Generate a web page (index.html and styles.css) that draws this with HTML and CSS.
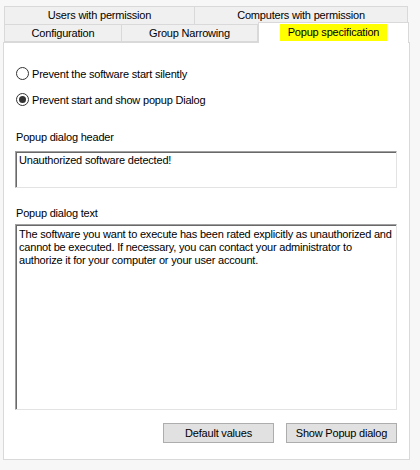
FILE: index.html
```html
<!DOCTYPE html>
<html>
<head>
<meta charset="utf-8">
<link rel="stylesheet" href="styles.css">
</head>
<body>
<div class="window">
  <div class="tabrow tabrow-top">
    <div class="tab tab-users">Users with permission</div>
    <div class="tab tab-computers">Computers with permission</div>
  </div>
  <div class="tabrow tabrow-bottom">
    <div class="tab tab-config">Configuration</div>
    <div class="tab tab-group">Group Narrowing</div>
    <div class="tab tab-selected"><span class="highlight">Popup specification</span></div>
  </div>
  <div class="panel">
    <div class="radio-row first">
      <span class="radio"></span>
      <span class="radio-label">Prevent the software start silently</span>
    </div>
    <div class="radio-row second">
      <span class="radio checked"></span>
      <span class="radio-label">Prevent start and show popup Dialog</span>
    </div>
    <div class="field-label label-header">Popup dialog header</div>
    <div class="textbox textbox-header">Unauthorized software detected!</div>
    <div class="field-label label-text">Popup dialog text</div>
    <div class="textbox textbox-body">The software you want to execute has been rated explicitly as unauthorized and cannot be executed. If necessary, you can contact your administrator to authorize it for your computer or your user account.</div>
    <div class="buttons">
      <div class="button">Default values</div>
      <div class="button">Show Popup dialog</div>
    </div>
  </div>
</div>
</body>
</html>
```
FILE: styles.css
```css
html, body {
  margin: 0;
  padding: 0;
  background: #f7f7f7;
}
body {
  font-family: "Liberation Sans", Arial, sans-serif;
  font-size: 11px;
  letter-spacing: -0.2px;
  color: #000;
}
.window {
  padding: 6px 0 0 3px;
  width: 407px;
}
.tabrow {
  display: flex;
  margin-left: 1px;
  height: 18px;
}
.tab {
  box-sizing: border-box;
  height: 19px;
  border: 1px solid #d9d9d9;
  background: #f0f0f0;
  display: flex;
  align-items: center;
  justify-content: center;
  line-height: 13px;
  white-space: nowrap;
}
.tabrow-top .tab { border-bottom: none; height: 18px; }
.tab-users { width: 191px; }
.tab-computers { width: 213px; border-left: none; }
.tabrow-bottom .tab { height: 18px; }
.tab-config { width: 118px; }
.tab-group { width: 136px; border-left: none; }
.tabrow-bottom .tab-selected {
  width: 151px;
  height: 21px;
  margin-top: -2px;
  background: #fff;
  border-bottom: none;
  position: relative;
  z-index: 2;
  align-items: flex-start;
  padding-top: 1px;
}
.highlight {
  display: inline-block;
  background: #ffff00;
  padding: 2px 8px 2px 8px;
  line-height: 13px;
}
.panel {
  box-sizing: border-box;
  width: 407px;
  height: 418px;
  margin-left: 0;
  border: 1px solid #d9d9d9;
  background: #fff;
  padding: 23px 11px 0 12px;
}
.radio-row {
  display: flex;
  align-items: center;
  height: 15px;
}
.radio-row.second { margin-top: 11px; }
.radio {
  box-sizing: border-box;
  width: 13px;
  height: 13px;
  border: 1px solid #333;
  border-radius: 50%;
  background: #fff;
  margin-right: 3px;
  display: flex;
  align-items: center;
  justify-content: center;
}
.radio.checked::after {
  content: "";
  width: 7px;
  height: 7px;
  border-radius: 50%;
  background: #333;
}
.field-label {
  height: 14px;
  line-height: 14px;
}
.label-header { margin-top: 23px; }
.label-text { margin-top: 18px; }
.textbox {
  box-sizing: border-box;
  width: 382px;
  margin-left: -1px;
  border-style: solid;
  border-width: 1px;
  border-color: #a0a0a0 #e3e3e3 #e3e3e3 #a0a0a0;
  box-shadow: inset 1px 1px 0 #696969;
  background: #fff;
  padding: 2px 2px 0 3px;
  line-height: 13px;
}
.textbox-header { height: 37px; margin-top: 7px; }
.textbox-body { height: 186px; margin-top: 4px; padding-top: 3px; }
.buttons {
  display: flex;
  justify-content: flex-end;
  gap: 12px;
  margin-top: 13px;
  width: 382px;
  margin-left: -1px;
}
.button {
  box-sizing: border-box;
  width: 111px;
  height: 20px;
  border: 1px solid #adadad;
  background: #e1e1e1;
  display: flex;
  align-items: center;
  justify-content: center;
}
```
